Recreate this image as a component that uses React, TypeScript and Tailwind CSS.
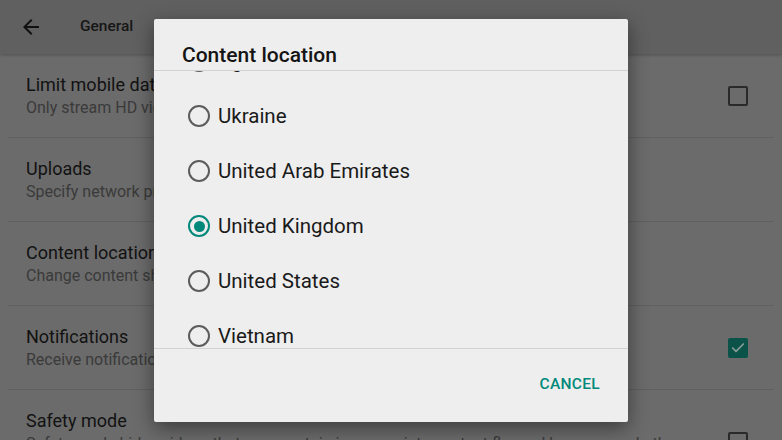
import { Check } from 'lucide-react'

interface SettingRow {
  title: string
  subtitle: string
  checkbox?: 'on' | 'off'
}

const rows: SettingRow[] = [
  { title: 'Limit mobile data usage', subtitle: 'Only stream HD video on Wi-Fi', checkbox: 'off' },
  { title: 'Uploads', subtitle: 'Specify network preferences for uploads' },
  { title: 'Content location', subtitle: 'Change content shown for a specific country' },
  { title: 'Notifications', subtitle: 'Receive notifications about new videos', checkbox: 'on' },
  {
    title: 'Safety mode',
    subtitle: 'Safety mode hides videos that may contain inappropriate content flagged by users and other signals.',
    checkbox: 'off',
  },
]

const countries = ['Turkey', 'Uganda', 'Ukraine', 'United Arab Emirates', 'United Kingdom', 'United States', 'Vietnam', 'Yemen']

function Radio({ selected }: { selected: boolean }) {
  if (selected) {
    return (
      <span className="flex h-[22px] w-[22px] shrink-0 items-center justify-center rounded-full border-2 border-[#00897b]">
        <span className="h-[11px] w-[11px] rounded-full bg-[#00897b]" />
      </span>
    )
  }
  return <span className="h-[22px] w-[22px] shrink-0 rounded-full border-2 border-[#5c5c5c]" />
}

export default function App() {
  return (
    <div className="relative h-[440px] w-[782px] overflow-hidden bg-[#6b6b6b] font-['Roboto',sans-serif]">
      {/* toolbar */}
      <div className="relative z-10 flex h-[54px] items-center bg-[#606060] shadow-[0_1px_3px_rgba(0,0,0,0.25)]">
        <svg width="24" height="24" viewBox="0 0 24 24" className="ml-[19px] fill-[#111]">
          <path d="M20 11H7.83l5.59-5.59L12 4l-8 8 8 8 1.41-1.41L7.83 13H20v-2z" />
        </svg>
        <span className="ml-[37px] text-[15.5px] font-medium text-[#161616]">General</span>
      </div>

      {/* settings list */}
      <div>
        {rows.map((row) => (
          <div key={row.title} className="mx-2 flex min-h-[83px] items-center border-b border-[#606060]">
            <div className="min-w-0 flex-1 self-start pl-[18px] pt-[20px] pb-[19px]">
              <div className="text-[18px] leading-[22px] text-[#121212]">{row.title}</div>
              <div className="mt-[2px] text-[16px] leading-[20px] text-[#3a3a3a]">{row.subtitle}</div>
            </div>
            <div className="mr-[26px] ml-6 flex w-[20px] justify-center">
              {row.checkbox === 'off' && <span className="h-[20px] w-[20px] rounded-[2px] border-2 border-[#2a2a2a]" />}
              {row.checkbox === 'on' && (
                <span className="flex h-[20px] w-[20px] items-center justify-center rounded-[2px] bg-[#0b5249]">
                  <Check size={16} strokeWidth={2.5} className="text-[#8a9c98]" />
                </span>
              )}
            </div>
          </div>
        ))}
      </div>

      {/* dialog */}
      <div className="absolute inset-0 z-20 flex items-center justify-center">
        <div className="flex h-[403px] w-[474px] flex-col rounded-[2px] bg-[#eeeeee] shadow-[0_6px_20px_rgba(0,0,0,0.45)]">
          <div className="border-b border-[#d2d2d2] px-[28px] pt-[24px] pb-[3px]">
            <h2 className="text-[21px] font-medium leading-[24px] text-[#141414]">Content location</h2>
          </div>
          <div className="h-[277px] overflow-hidden">
            <div className="-mt-[92px]">
              {countries.map((c) => (
                <div key={c} className="flex h-[55px] items-center gap-[8px] pl-[34px]">
                  <Radio selected={c === 'United Kingdom'} />
                  <span className="text-[20.5px] text-[#1a1a1a]">{c}</span>
                </div>
              ))}
            </div>
          </div>
          <div className="flex flex-1 items-center justify-end border-t border-[#d2d2d2] pr-[28px]">
            <span className="text-[15.5px] font-medium tracking-[0.3px] text-[#00897b]">CANCEL</span>
          </div>
        </div>
      </div>
    </div>
  )
}
